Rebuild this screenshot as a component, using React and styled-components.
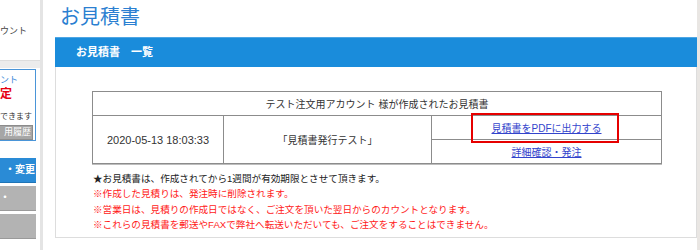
import React from 'react';
import styled, { createGlobalStyle } from 'styled-components';

const JP = `"Liberation Sans", "Noto Sans CJK JP", sans-serif`;

const GlobalStyle = createGlobalStyle`
  html, body {
    margin: 0;
    padding: 0;
    background: #fff;
    overflow: hidden;
  }
  body {
    font-family: ${JP};
    color: #333;
  }
`;

const Page = styled.div`
  display: flex;
  width: 700px;
  height: 250px;
  overflow: hidden;
`;

/* ---------- sidebar (scrolled off to the left) ---------- */

const Sidebar = styled.aside`
  width: 40px;
  flex-shrink: 0;
  display: flex;
  flex-direction: column;
  border-right: 3px solid #e4e4e4;
  background: #fff;
  overflow: hidden;
`;

const AccountCard = styled.div`
  height: 61px;
  display: flex;
  align-items: center;
  font-size: 9px;
  color: #444;
  border-bottom: 1px solid #ddd;
  box-sizing: border-box;
`;

const SideGap = styled.div`
  height: 7px;
  background: #ececec;
`;

const SideBody = styled.div`
  display: flex;
  flex-direction: column;
  padding-top: 1px;
`;

const PointBox = styled.div`
  width: 36px;
  height: 72px;
  box-sizing: border-box;
  border: 1px solid #4a95d8;
  border-left: none;
  display: flex;
  flex-direction: column;
  overflow: hidden;
  white-space: nowrap;
`;

const PointLabel = styled.div`
  font-size: 9px;
  color: #3b8ad9;
  line-height: 12px;
  margin-top: 4px;
`;

const PointValue = styled.div`
  font-size: 12px;
  font-weight: bold;
  color: #e60012;
  line-height: 16px;
`;

const PointNote = styled.div`
  font-size: 8px;
  color: #333;
  line-height: 10px;
  margin-top: 10px;
`;

const HistoryButton = styled.div`
  width: 33px;
  height: 15px;
  margin-top: 3px;
  background: #a6a6a6;
  border: 1px solid #8c8c8c;
  border-left: none;
  box-sizing: border-box;
  color: #fff;
  font-size: 9px;
  line-height: 13px;
  text-align: right;
  padding-right: 1px;
`;

const MenuList = styled.div`
  display: flex;
  flex-direction: column;
  gap: 3px;
  margin-top: 17px;
`;

const MenuItem = styled.div`
  width: 36px;
  height: 25px;
  background: ${p => (p.$active ? '#2a8bd6' : '#b3b3b3')};
  border-bottom: 1px solid ${p => (p.$active ? '#1f74b6' : '#9a9a9a')};
  box-sizing: border-box;
  color: #fff;
  font-size: 10px;
  font-weight: bold;
  line-height: 24px;
  text-align: ${p => (p.$active ? 'right' : 'left')};
  padding-right: 1px;
  white-space: nowrap;
  overflow: hidden;
`;

/* ---------- main ---------- */

const Main = styled.main`
  flex: 1;
  display: flex;
  flex-direction: column;
  padding-left: 12px;
  border-right: 3px solid #e9e6e3;
`;

const Title = styled.h1`
  margin: 0 0 3px 5px;
  font-size: 20px;
  font-weight: normal;
  line-height: 34px;
  color: #2b7fd1;
`;

const Panel = styled.section`
  display: flex;
  flex-direction: column;
`;

const PanelHead = styled.div`
  height: 30px;
  background: #1a8cdb;
  border-top: 1px solid #4ea6e4;
  box-sizing: border-box;
  color: #fff;
  font-size: 11px;
  font-weight: bold;
  line-height: 29px;
  padding-left: 21px;
`;

const PanelBody = styled.div`
  border: 1px solid #ddd;
  border-top: none;
  padding: 24px 0 7px;
  height: 171px;
  box-sizing: border-box;
`;

const QuoteTable = styled.table`
  width: 570px;
  margin: 0 0 0 36px;
  border-collapse: collapse;
  font-size: 10px;
  color: #333;
  box-shadow: 0 1px 0 #bdbdbd;

  td {
    border: 1px solid #8c8c8c;
    text-align: center;
    padding: 0;
    height: 23px;
  }
`;

const DateCell = styled.td`
  width: 130px;
  font-size: 11px;
`;

const NameCell = styled.td`
  width: 207px;
`;

const ActionCell = styled.td`
  position: relative;
`;

const ActionLink = styled.a`
  color: #3344cc;
  text-decoration: underline;
  cursor: pointer;
`;

const Highlight = styled.span`
  position: absolute;
  left: 39px;
  right: 42px;
  top: -3px;
  bottom: -4px;
  border: 2px solid #e60000;
  pointer-events: none;
`;

const Notes = styled.ul`
  list-style: none;
  margin: 7px 0 0 37px;
  padding: 0;
  font-size: 9.6px;
  line-height: 15.3px;
`;

const Note = styled.li`
  color: ${p => (p.$warn ? '#ff1a1a' : '#222')};
  white-space: nowrap;
`;

export default function App() {
  return (
    <>
      <GlobalStyle />
      <Page>
        <Sidebar>
          <AccountCard>ウント</AccountCard>
          <SideGap />
          <SideBody>
            <PointBox>
              <PointLabel>ント</PointLabel>
              <PointValue>定</PointValue>
              <PointNote>できます</PointNote>
              <HistoryButton>用履歴</HistoryButton>
            </PointBox>
            <MenuList>
              <MenuItem $active>・変更</MenuItem>
              <MenuItem>・</MenuItem>
              <MenuItem />
            </MenuList>
          </SideBody>
        </Sidebar>

        <Main>
          <Title>お見積書</Title>
          <Panel>
            <PanelHead>お見積書　一覧</PanelHead>
            <PanelBody>
              <QuoteTable>
                <tbody>
                  <tr>
                    <td colSpan={3}>テスト注文用アカウント 様が作成されたお見積書</td>
                  </tr>
                  <tr>
                    <DateCell rowSpan={2}>2020-05-13 18:03:33</DateCell>
                    <NameCell rowSpan={2}>「見積書発行テスト」</NameCell>
                    <ActionCell>
                      <ActionLink>見積書をPDFに出力する</ActionLink>
                      <Highlight />
                    </ActionCell>
                  </tr>
                  <tr>
                    <ActionCell>
                      <ActionLink>詳細確認・発注</ActionLink>
                    </ActionCell>
                  </tr>
                </tbody>
              </QuoteTable>
              <Notes>
                <Note>★お見積書は、作成されてから1週間が有効期限とさせて頂きます。</Note>
                <Note $warn>※作成した見積りは、発注時に削除されます。</Note>
                <Note $warn>※営業日は、見積りの作成日ではなく、ご注文を頂いた翌日からのカウントとなります。</Note>
                <Note $warn>※これらの見積書を郵送やFAXで弊社へ転送いただいても、ご注文をすることはできません。</Note>
              </Notes>
            </PanelBody>
          </Panel>
        </Main>
      </Page>
    </>
  );
}
